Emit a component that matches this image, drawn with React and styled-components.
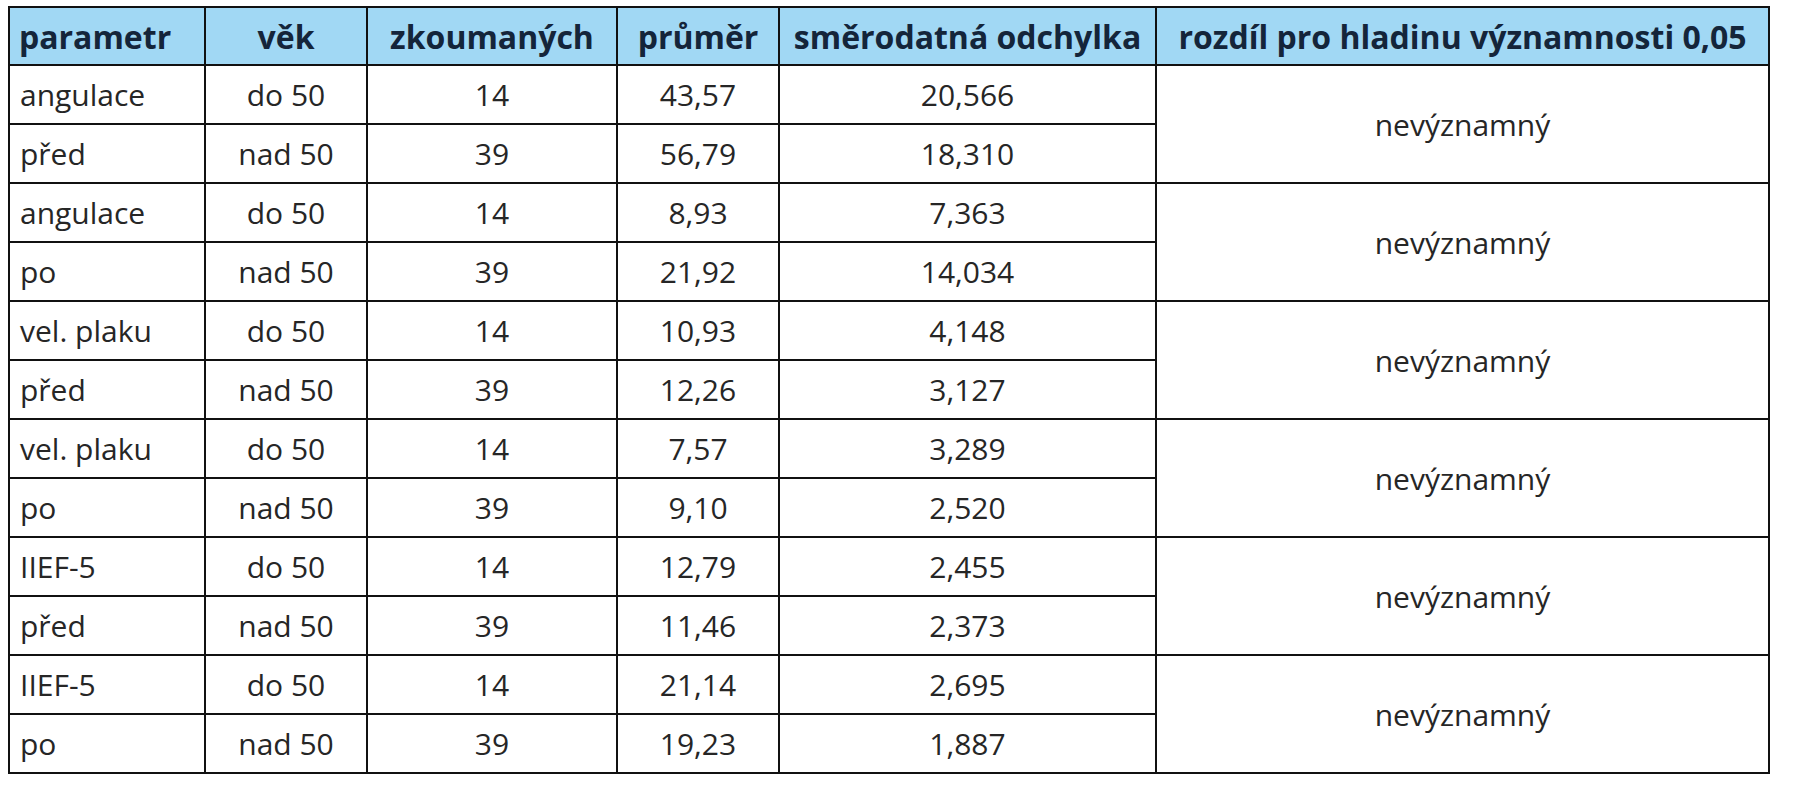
import React from 'react'
import styled, { createGlobalStyle } from 'styled-components'

const GlobalStyle = createGlobalStyle`
  body {
    margin: 0;
    padding: 6px 0 0 8px;
    background: #ffffff;
    font-family: 'Open Sans', 'Liberation Sans', sans-serif;
  }
`

const Table = styled.table`
  border-collapse: collapse;
  table-layout: fixed;
  width: 1760px;
  color: #262626;
`

const HeadRow = styled.tr`
  height: 58px;
  background-color: #a1d8f4;
`

const HeadCell = styled.th`
  border: 2px solid #111111;
  padding: 0 9px;
  font-size: 32px;
  font-weight: 700;
  color: #14253a;
  text-align: ${(p) => (p.left ? 'left' : 'center')};
  white-space: nowrap;
`

const BodyRow = styled.tr`
  height: 59px;
`

const Cell = styled.td`
  border: 2px solid #111111;
  padding: 0 10px;
  font-size: 30px;
  font-weight: 400;
  text-align: ${(p) => (p.left ? 'left' : 'center')};
  white-space: nowrap;
`

const columns = [196, 162, 250, 162, 377, 613]

const groups = [
  { param: ['angulace', 'před'], rows: [['14', '43,57', '20,566'], ['39', '56,79', '18,310']] },
  { param: ['angulace', 'po'], rows: [['14', '8,93', '7,363'], ['39', '21,92', '14,034']] },
  { param: ['vel. plaku', 'před'], rows: [['14', '10,93', '4,148'], ['39', '12,26', '3,127']] },
  { param: ['vel. plaku', 'po'], rows: [['14', '7,57', '3,289'], ['39', '9,10', '2,520']] },
  { param: ['IIEF-5', 'před'], rows: [['14', '12,79', '2,455'], ['39', '11,46', '2,373']] },
  { param: ['IIEF-5', 'po'], rows: [['14', '21,14', '2,695'], ['39', '19,23', '1,887']] },
]

const ages = ['do 50', 'nad 50']

export default function App() {
  return (
    <>
      <GlobalStyle />
      <Table>
        <colgroup>
          {columns.map((w, i) => (
            <col key={i} style={{ width: w }} />
          ))}
        </colgroup>
        <thead>
          <HeadRow>
            <HeadCell left>parametr</HeadCell>
            <HeadCell>věk</HeadCell>
            <HeadCell>zkoumaných</HeadCell>
            <HeadCell>průměr</HeadCell>
            <HeadCell>směrodatná odchylka</HeadCell>
            <HeadCell>rozdíl pro hladinu významnosti 0,05</HeadCell>
          </HeadRow>
        </thead>
        <tbody>
          {groups.map((g, gi) =>
            g.rows.map((r, ri) => (
              <BodyRow key={`${gi}-${ri}`}>
                <Cell left>{g.param[ri]}</Cell>
                <Cell>{ages[ri]}</Cell>
                <Cell>{r[0]}</Cell>
                <Cell>{r[1]}</Cell>
                <Cell>{r[2]}</Cell>
                {ri === 0 && <Cell rowSpan={2}>nevýznamný</Cell>}
              </BodyRow>
            ))
          )}
        </tbody>
      </Table>
    </>
  )
}
